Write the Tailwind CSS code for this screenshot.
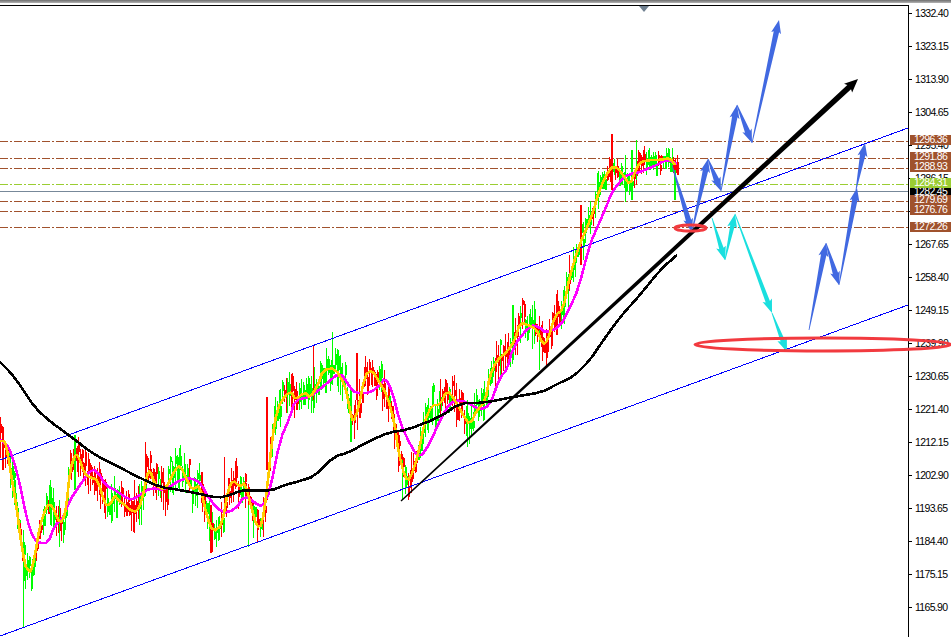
<!DOCTYPE html>
<html lang="en">

<head>
  <meta charset="UTF-8">
  <title>Chart</title>
  <script src="https://cdn.jsdelivr.net/npm/@tailwindcss/browser@4"></script>
</head>

<body class="bg-white overflow-hidden">

  <div class="relative w-[951px] h-[637px] overflow-hidden font-['Liberation_Sans',sans-serif] text-[10.5px] tracking-[-0.7px] text-black">

    <div class="relative z-10 h-[3px] bg-gradient-to-b from-[#6e6e6e] to-[#b4b4b4]"></div>

    <div class="flex h-[634px] pt-[2px]">
      <!-- plot area -->
      <div class="relative w-[909px] border-t border-r border-black">
        <div class="absolute left-[639px] top-0 w-0 h-0 border-x-[5px] border-x-transparent border-t-[6px] border-t-[#708090]"></div>
      </div>

      <!-- price scale -->
      <div class="flex-1 flex flex-col -mt-[8px] leading-[13px]">
        <div class="h-[33px] flex items-center gap-[3px]"><i class="w-[3px] h-px bg-black"></i>1332.40</div>
        <div class="h-[33px] flex items-center gap-[3px]"><i class="w-[3px] h-px bg-black"></i>1323.15</div>
        <div class="h-[33px] flex items-center gap-[3px]"><i class="w-[3px] h-px bg-black"></i>1313.90</div>
        <div class="h-[33px] flex items-center gap-[3px]"><i class="w-[3px] h-px bg-black"></i>1304.65</div>
        <div class="h-[33px] flex items-center gap-[3px]"><i class="w-[3px] h-px bg-black"></i>1295.40</div>
        <div class="h-[33px] flex items-center gap-[3px]"><i class="w-[3px] h-px bg-black"></i>1286.15</div>
        <div class="h-[33px] flex items-center gap-[3px]"><i class="w-[3px] h-px bg-black"></i>1276.90</div>
        <div class="h-[33px] flex items-center gap-[3px]"><i class="w-[3px] h-px bg-black"></i>1267.65</div>
        <div class="h-[33px] flex items-center gap-[3px]"><i class="w-[3px] h-px bg-black"></i>1258.40</div>
        <div class="h-[33px] flex items-center gap-[3px]"><i class="w-[3px] h-px bg-black"></i>1249.15</div>
        <div class="h-[33px] flex items-center gap-[3px]"><i class="w-[3px] h-px bg-black"></i>1239.90</div>
        <div class="h-[33px] flex items-center gap-[3px]"><i class="w-[3px] h-px bg-black"></i>1230.65</div>
        <div class="h-[33px] flex items-center gap-[3px]"><i class="w-[3px] h-px bg-black"></i>1221.40</div>
        <div class="h-[33px] flex items-center gap-[3px]"><i class="w-[3px] h-px bg-black"></i>1212.15</div>
        <div class="h-[33px] flex items-center gap-[3px]"><i class="w-[3px] h-px bg-black"></i>1202.90</div>
        <div class="h-[33px] flex items-center gap-[3px]"><i class="w-[3px] h-px bg-black"></i>1193.65</div>
        <div class="h-[33px] flex items-center gap-[3px]"><i class="w-[3px] h-px bg-black"></i>1184.40</div>
        <div class="h-[33px] flex items-center gap-[3px]"><i class="w-[3px] h-px bg-black"></i>1175.15</div>
        <div class="h-[33px] flex items-center gap-[3px]"><i class="w-[3px] h-px bg-black"></i>1165.90</div>
      </div>
    </div>

    <!-- chart drawing -->
    <svg id="chart" class="absolute left-0 top-0 w-[909px] h-[637px]" viewBox="0 0 909 637">
      <g fill="none" stroke-width="1" shape-rendering="crispEdges">
        <path stroke="#a0522d" stroke-dasharray="8 2 2 2" d="M0 141.5H908M0 158.5H908M0 168.5H908M0 201.5H908M0 211.5H908M0 227.5H908" />
        <path stroke="#9acd32" stroke-dasharray="8 2 2 2" d="M0 184.5H908" />
        <path stroke="#778899" d="M0 191.5H908" />
      </g>
      <g id="candles" shape-rendering="crispEdges"></g>
      <g fill="none" stroke="#0000ff" stroke-width="1" shape-rendering="crispEdges">
        <path d="M0 460L908 128" />
        <path d="M0 636L908 305" />
      </g>
      <g fill="none" stroke-linejoin="round" shape-rendering="crispEdges">
        <polyline class="ma" stroke="#ff00ff" stroke-width="2.6" points="0,440 8,445 15,465 20,485 25,510 30,530 35,540 40,543 48,543 55,525 62,520 70,500 80,485 92,468 100,475 105,485 115,490 125,497 132,500 140,495 150,488 165,490 180,480 190,478 200,482 210,500 222,513 235,510 245,495 255,503 263,507 270,490 280,440 290,417 295,400 310,397 325,385 340,372 350,387 355,393 370,393 380,385 385,378 392,390 400,423 413,450 420,458 430,443 440,420 450,403 460,400 470,404 480,410 490,405 500,377 507,370 513,347 530,325 540,327 545,333 560,327 570,307 578,290 590,244 597,228 607,205 612,192 623,178 630,174 640,172 647,169 657,165 667,159 677,164" />
        <polyline class="ma" id="fast" stroke="#ffcc00" stroke-width="2.6" points="0,441 5,441 8,455 12,480 17,510 20,535 25,565 28,570 31,572 35,555 40,525 47,505 52,505 58,520 62,522 66,510 70,470 75,455 78,455 85,475 92,478 98,480 105,505 110,505 115,495 118,500 125,505 130,510 137,512 142,500 147,475 150,470 155,485 165,490 175,470 180,465 187,480 192,490 200,485 207,517 213,532 222,525 228,490 233,480 240,487 245,482 252,510 257,527 262,525 267,490 272,440 277,410 285,395 292,392 295,400 305,392 310,398 318,385 323,370 335,368 345,385 350,410 353,423 358,410 365,375 372,370 378,380 387,395 395,425 398,450 405,478 410,480 418,455 425,420 432,405 440,405 447,390 455,400 463,415 470,425 477,410 485,402 490,375 497,360 507,352 515,340 520,322 530,326 537,330 543,345 548,340 555,315 563,310 570,275 580,243 587,228 593,212 600,188 610,168 617,167 623,175 630,185 635,172 640,162 650,160 660,160 670,158 675,165" />
        <polyline class="ma" stroke="#000000" stroke-width="2.6" points="0,362 10,372 20,385 35,408 52,423 62,430 75,440 95,455 115,465 140,478 160,487 180,490 200,494 218,498 230,495 240,491 250,490 270,491 285,485 300,481 315,476 333,457 350,452 367,442 390,432 407,430 440,417 460,403 483,403 513,397 543,392 557,384 573,377 590,360 600,345 620,317 640,295 660,270 677,255" />
      </g>
      <g id="arrows"></g>
    </svg>

    <!-- level tags sit over the price scale -->
    <div class="absolute left-[910px] top-[135px] w-[41px] h-[10px] flex items-center justify-center bg-[#a0522d] text-white">1296.36</div>
    <div class="absolute left-[910px] top-[152px] w-[41px] h-[10px] flex items-center justify-center bg-[#a0522d] text-white">1291.86</div>
    <div class="absolute left-[910px] top-[162px] w-[41px] h-[10px] flex items-center justify-center bg-[#a0522d] text-white">1288.93</div>
    <div class="absolute left-[910px] top-[178px] w-[41px] h-[10px] flex items-center justify-center bg-[#9acd32] text-white">1284.31</div>
    <div class="absolute left-[910px] top-[188px] w-[41px] h-[7px] flex items-center justify-center overflow-hidden bg-black text-white">1282.45</div>
    <div class="absolute left-[910px] top-[195px] w-[41px] h-[10px] flex items-center justify-center bg-[#a0522d] text-white">1279.69</div>
    <div class="absolute left-[910px] top-[205px] w-[41px] h-[10px] flex items-center justify-center bg-[#a0522d] text-white">1276.76</div>
    <div class="absolute left-[910px] top-[222px] w-[41px] h-[10px] flex items-center justify-center bg-[#a0522d] text-white">1272.26</div>

    <!-- the big ellipse runs across the scale -->
    <svg class="absolute left-0 top-0 w-[951px] h-[637px] pointer-events-none" viewBox="0 0 951 637">
      <g fill="none" stroke="#f23a3f" stroke-width="3">
        <ellipse cx="823" cy="344.5" rx="128" ry="6.5" />
        <ellipse cx="690.5" cy="228" rx="15.5" ry="3" />
      </g>
    </svg>
  </div>

  <script>
    const NS = 'http://www.w3.org/2000/svg';

    // simple repeatable random numbers
    let seed = 29;
    function rnd() {
      seed = (seed * 16807) % 2147483647;
      return seed / 2147483647;
    }

    const fast = document.getElementById('fast').getAttribute('points').trim().split(' ')
      .map(p => p.split(',').map(Number));

    function fastAt(x) {
      for (let i = 1; i < fast.length; i++) {
        if (x <= fast[i][0]) {
          const a = fast[i - 1], b = fast[i];
          return a[1] + (b[1] - a[1]) * (x - a[0]) / (b[0] - a[0]);
        }
      }
      return fast[fast.length - 1][1];
    }

    // rounds off the corners of the moving averages
    document.querySelectorAll('.ma').forEach(line => {
      const pts = line.getAttribute('points').trim().split(' ').map(p => p.split(',').map(Number));
      const out = [pts[0]];
      for (let i = 1; i < pts.length; i++) {
        const a = pts[i - 1], b = pts[i];
        out.push([a[0] * 0.75 + b[0] * 0.25, a[1] * 0.75 + b[1] * 0.25]);
        out.push([a[0] * 0.25 + b[0] * 0.75, a[1] * 0.25 + b[1] * 0.75]);
      }
      out.push(pts[pts.length - 1]);
      line.setAttribute('points', out.map(p => p.join(',')).join(' '));
    });

    // x, high, low of the long wicks
    const spikes = [[2, 428, 470, 'r', 2], [23, 530, 628, 'g', 1], [50, 480, 525, 'g', 1], [59, 500, 547, 'g', 1], [74, 435, 490, 'g', 2], [134, 480, 528, 'r', 1],
      [145, 442, 490, 'r', 1], [179, 448, 490, 'g', 1], [210, 505, 553, 'r', 2], [224, 457, 510, 'r', 1], [248, 505, 547, 'g', 1], [266, 397, 470, 'r', 2], [313, 345, 400, 'r', 1],
      [332, 332, 385, 'g', 1], [350, 390, 442, 'g', 2], [356, 353, 400, 'r', 2], [402, 460, 500, 'g', 1], [440, 379, 420, 'r', 1], [467, 405, 447, 'g', 1], [512, 305, 360, 'g', 2],
      [539, 330, 370, 'g', 1], [557, 290, 335, 'r', 1], [580, 205, 265, 'r', 2], [611, 134, 190, 'r', 2], [625, 155, 202, 'g', 1], [631, 150, 200, 'g', 2], [636, 140, 180, 'g', 1]];

    function bar(parent, x, y1, y2, w, color) {
      const r = document.createElementNS(NS, 'rect');
      r.setAttribute('x', Math.round(x));
      r.setAttribute('y', Math.round(y1));
      r.setAttribute('width', w);
      r.setAttribute('height', Math.max(1, Math.round(y2 - y1)));
      r.setAttribute('fill', color);
      parent.appendChild(r);
    }

    const candles = document.getElementById('candles');
    let color = '#ff0000';
    for (let x = 0; x < 678; x += 1.7) {
      const span = x > 600 ? 11 : 20;
      const mid = fastAt(x) + (rnd() - 0.5) * 10;
      const top = mid - 3 - rnd() * span;
      const bottom = mid + 3 + rnd() * span;
      if (rnd() < 0.35) color = rnd() < 0.5 ? '#ff0000' : '#00ff00';
      bar(candles, x, top, bottom, 1, color);
      const a = top + rnd() * (bottom - top) * 0.5;
      bar(candles, x, a, a + 5 + rnd() * 10, 2, color);
    }
    spikes.forEach(s => bar(candles, s[0], s[1], s[2], s[4], s[3] === 'r' ? '#ff0000' : '#00ff00'));
    bar(candles, 674, 170, 200, 2, '#00ff00');

    // tapered arrow, thin at the tail, head at the tip
    function arrow(x1, y1, x2, y2, color, tailW, maxW, headW, headL) {
      const len = Math.hypot(x2 - x1, y2 - y1);
      const ux = (x2 - x1) / len, uy = (y2 - y1) / len;
      const nx = -uy, ny = ux;
      const bx = x2 - ux * headL, by = y2 - uy * headL;
      const pts = [
        [x1 + nx * tailW / 2, y1 + ny * tailW / 2],
        [bx + nx * maxW / 2, by + ny * maxW / 2],
        [bx + nx * headW / 2 - ux * 1.5, by + ny * headW / 2 - uy * 1.5],
        [x2, y2],
        [bx - nx * headW / 2 - ux * 1.5, by - ny * headW / 2 - uy * 1.5],
        [bx - nx * maxW / 2, by - ny * maxW / 2],
        [x1 - nx * tailW / 2, y1 - ny * tailW / 2]
      ];
      const p = document.createElementNS(NS, 'polygon');
      p.setAttribute('points', pts.map(q => q.join(',')).join(' '));
      p.setAttribute('fill', color);
      document.getElementById('arrows').appendChild(p);
    }

    const blue = '#4169e1', cyan = '#1adfdf';
    [[672, 165, 692, 232], [692, 232, 708, 159], [708, 159, 721, 191], [721, 191, 737, 105], [737, 105, 752, 143], [752, 143, 779, 20],
      [809, 330, 826, 243], [826, 243, 839, 285], [839, 285, 857, 188], [856, 190, 865, 143]]
      .forEach(a => arrow(a[0], a[1], a[2], a[3], blue, 0.8, 5.5, 10, 12));
    [[712, 218, 725, 260], [725, 260, 735, 214], [735, 214, 772, 313], [772, 313, 787, 352]]
      .forEach(a => arrow(a[0], a[1], a[2], a[3], cyan, 0.8, 4.5, 10, 12));
    arrow(401, 501, 858, 79, '#000000', 1.4, 5.5, 12, 12);
  </script>
</body>

</html>
